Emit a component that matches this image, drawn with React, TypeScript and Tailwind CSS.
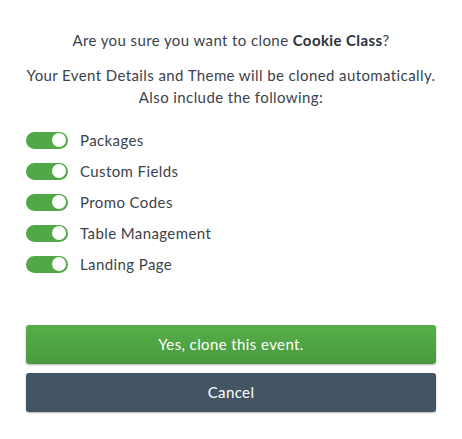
import React, { useState } from "react";

const items = ["Packages", "Custom Fields", "Promo Codes", "Table Management", "Landing Page"];

function Toggle({ on, onClick }: { on: boolean; onClick: () => void }) {
  return (
    <button
      onClick={onClick}
      className={`flex h-[17px] w-[42px] shrink-0 items-center rounded-full px-[2px] ${on ? "justify-end bg-[#52a847]" : "justify-start bg-[#c9ced3]"}`}
    >
      <span className="h-[14px] w-[14px] rounded-full bg-white" />
    </button>
  );
}

export default function App() {
  const [state, setState] = useState(items.map(() => true));
  return (
    <div className="h-[439px] w-[462px] bg-white px-[26px] pt-[29px] text-[15px] tracking-[0.4px] text-[#3b424a]" style={{ fontFamily: "Lato, 'Open Sans', sans-serif" }}>
      <p className="text-center leading-[22px]">
        Are you sure you want to clone <b className="font-bold text-[#2b323a]">Cookie Class</b>?
      </p>
      <p className="-mx-[10px] mt-[13px] whitespace-nowrap text-center leading-[22px]">
        Your Event Details and Theme will be cloned automatically.
        <br />
        Also include the following:
      </p>
      <ul className="mt-[23px] flex flex-col gap-[13px]">
        {items.map((label, i) => (
          <li key={label} className="flex h-[18px] items-center gap-[12px]">
            <Toggle on={state[i]} onClick={() => setState(s => s.map((v, j) => (j === i ? !v : v)))} />
            <span>{label}</span>
          </li>
        ))}
      </ul>
      <div className="mt-[52px] flex flex-col gap-[9px]">
        <button className="h-[39px] w-full rounded-[3px] bg-gradient-to-b from-[#56ae49] to-[#4a9a3f] text-white shadow-[0_1px_2px_rgba(0,0,0,0.3)]">
          Yes, clone this event.
        </button>
        <button className="h-[39px] w-full rounded-[3px] bg-[#435565] text-white shadow-[0_1px_2px_rgba(0,0,0,0.3)]">
          Cancel
        </button>
      </div>
    </div>
  );
}
